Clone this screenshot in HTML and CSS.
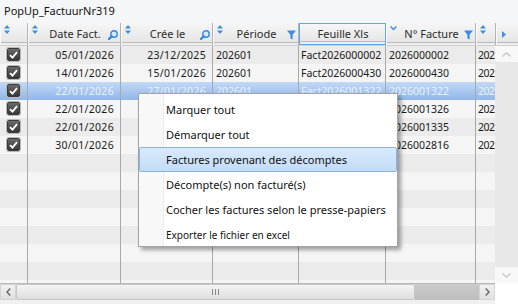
FILE: index.html
```html
<!DOCTYPE html>
<html lang="fr">
<head>
<meta charset="utf-8">
<title>PopUp_FactuurNr319</title>
<link rel="stylesheet" href="styles.css">
</head>
<body>
<div class="window">
  <div class="title">PopUp_FactuurNr319</div>
  <div class="grid">
    <div class="header">
      <div class="hcell">
        <svg class="sort" width="6" height="9" viewBox="0 0 6 9"><path d="M3 0L6 3.6H0Z M0 5.4H6L3 9Z"/></svg>
      </div>
      <div class="hcell">
        <svg class="sort" width="6" height="9" viewBox="0 0 6 9"><path d="M3 0L6 3.6H0Z M0 5.4H6L3 9Z"/></svg>
        <span class="hlabel">Date Fact.</span>
        <svg class="hicon" width="10" height="10" viewBox="0 0 10 10"><circle cx="6" cy="4" r="3.2" fill="#d7ebfc" stroke="#2e86dc" stroke-width="1.4"/><path d="M3.7 6.3L1 9" stroke="#2e86dc" stroke-width="2.2" stroke-linecap="round"/></svg>
      </div>
      <div class="hcell">
        <svg class="sort" width="6" height="9" viewBox="0 0 6 9"><path d="M3 0L6 3.6H0Z M0 5.4H6L3 9Z"/></svg>
        <span class="hlabel">Crée le</span>
        <svg class="hicon" width="10" height="10" viewBox="0 0 10 10"><circle cx="6" cy="4" r="3.2" fill="#d7ebfc" stroke="#2e86dc" stroke-width="1.4"/><path d="M3.7 6.3L1 9" stroke="#2e86dc" stroke-width="2.2" stroke-linecap="round"/></svg>
      </div>
      <div class="hcell">
        <svg class="sort" width="6" height="9" viewBox="0 0 6 9"><path d="M3 0L6 3.6H0Z M0 5.4H6L3 9Z"/></svg>
        <span class="hlabel">Période</span>
        <svg class="hicon" width="9" height="10" viewBox="0 0 9 10"><path d="M0 0.5H9L5.6 4.8V9.6L3.4 8.4V4.8Z" fill="#3a8de0"/></svg>
      </div>
      <div class="hcell focus">
        <span></span>
        <span class="hlabel">Feuille Xls</span>
        <span></span>
      </div>
      <div class="hcell">
        <svg class="chev" width="7" height="5" viewBox="0 0 7 5"><path d="M0.6 0.6L3.5 3.6L6.4 0.6" fill="none" stroke="#3a8de0" stroke-width="1.4"/></svg>
        <span class="hlabel">N° Facture</span>
        <svg class="hicon" width="9" height="10" viewBox="0 0 9 10"><path d="M0 0.5H9L5.6 4.8V9.6L3.4 8.4V4.8Z" fill="#3a8de0"/></svg>
      </div>
      <div class="hcell">
        <svg class="sort" width="6" height="9" viewBox="0 0 6 9"><path d="M3 0L6 3.6H0Z M0 5.4H6L3 9Z"/></svg>
      </div>
      <div class="hcell last">
        <svg class="tri" width="4" height="7" viewBox="0 0 4 7"><path d="M0 0L4 3.5L0 7Z"/></svg>
      </div>
    </div>

    <div class="body">
      <div class="rows">
        <div class="row">
          <div class="cell chk"><span class="checkbox"><svg width="9" height="8" viewBox="0 0 9 8"><path d="M1 4.2L3.5 6.6L8 1.2" fill="none" stroke="#fff" stroke-width="1.8"/></svg></span></div>
          <div class="cell date">05/01/2026</div>
          <div class="cell date">23/12/2025</div>
          <div class="cell">202601</div>
          <div class="cell tight">Fact2026000002</div>
          <div class="cell">2026000002</div>
          <div class="cell">202</div>
        </div>
        <div class="row">
          <div class="cell chk"><span class="checkbox"><svg width="9" height="8" viewBox="0 0 9 8"><path d="M1 4.2L3.5 6.6L8 1.2" fill="none" stroke="#fff" stroke-width="1.8"/></svg></span></div>
          <div class="cell date">14/01/2026</div>
          <div class="cell date">15/01/2026</div>
          <div class="cell">202601</div>
          <div class="cell tight">Fact2026000430</div>
          <div class="cell">2026000430</div>
          <div class="cell">202</div>
        </div>
        <div class="row sel">
          <div class="cell chk"><span class="checkbox"><svg width="9" height="8" viewBox="0 0 9 8"><path d="M1 4.2L3.5 6.6L8 1.2" fill="none" stroke="#fff" stroke-width="1.8"/></svg></span></div>
          <div class="cell date">22/01/2026</div>
          <div class="cell date">27/01/2026</div>
          <div class="cell">202601</div>
          <div class="cell tight">Fact2026001322</div>
          <div class="cell">2026001322</div>
          <div class="cell">202</div>
        </div>
        <div class="row">
          <div class="cell chk"><span class="checkbox"><svg width="9" height="8" viewBox="0 0 9 8"><path d="M1 4.2L3.5 6.6L8 1.2" fill="none" stroke="#fff" stroke-width="1.8"/></svg></span></div>
          <div class="cell date">22/01/2026</div>
          <div class="cell date"></div>
          <div class="cell"></div>
          <div class="cell tight"></div>
          <div class="cell">2026001326</div>
          <div class="cell">202</div>
        </div>
        <div class="row">
          <div class="cell chk"><span class="checkbox"><svg width="9" height="8" viewBox="0 0 9 8"><path d="M1 4.2L3.5 6.6L8 1.2" fill="none" stroke="#fff" stroke-width="1.8"/></svg></span></div>
          <div class="cell date">22/01/2026</div>
          <div class="cell date"></div>
          <div class="cell"></div>
          <div class="cell tight"></div>
          <div class="cell">2026001335</div>
          <div class="cell">202</div>
        </div>
        <div class="row">
          <div class="cell chk"><span class="checkbox"><svg width="9" height="8" viewBox="0 0 9 8"><path d="M1 4.2L3.5 6.6L8 1.2" fill="none" stroke="#fff" stroke-width="1.8"/></svg></span></div>
          <div class="cell date">30/01/2026</div>
          <div class="cell date"></div>
          <div class="cell"></div>
          <div class="cell tight"></div>
          <div class="cell">2026002816</div>
          <div class="cell">202</div>
        </div>
        <div class="row"><div class="cell"></div><div class="cell"></div><div class="cell"></div><div class="cell"></div><div class="cell"></div><div class="cell"></div><div class="cell"></div></div>
        <div class="row"><div class="cell"></div><div class="cell"></div><div class="cell"></div><div class="cell"></div><div class="cell"></div><div class="cell"></div><div class="cell"></div></div>
        <div class="row"><div class="cell"></div><div class="cell"></div><div class="cell"></div><div class="cell"></div><div class="cell"></div><div class="cell"></div><div class="cell"></div></div>
        <div class="row"><div class="cell"></div><div class="cell"></div><div class="cell"></div><div class="cell"></div><div class="cell"></div><div class="cell"></div><div class="cell"></div></div>
        <div class="row"><div class="cell"></div><div class="cell"></div><div class="cell"></div><div class="cell"></div><div class="cell"></div><div class="cell"></div><div class="cell"></div></div>
        <div class="row"><div class="cell"></div><div class="cell"></div><div class="cell"></div><div class="cell"></div><div class="cell"></div><div class="cell"></div><div class="cell"></div></div>
        <div class="row"><div class="cell"></div><div class="cell"></div><div class="cell"></div><div class="cell"></div><div class="cell"></div><div class="cell"></div><div class="cell"></div></div>
        <div class="row"><div class="cell"></div><div class="cell"></div><div class="cell"></div><div class="cell"></div><div class="cell"></div><div class="cell"></div><div class="cell"></div></div>
      </div>
      <div class="vscroll">
        <div class="vbtn"><svg width="9" height="5" viewBox="0 0 9 5"><path d="M0.5 4.5L4.5 0.8L8.5 4.5" fill="none" stroke="#c4c4c4" stroke-width="1.3"/></svg></div>
        <div class="vtrack"></div>
        <div class="vbtn"><svg width="9" height="5" viewBox="0 0 9 5"><path d="M0.5 0.5L4.5 4.2L8.5 0.5" fill="none" stroke="#c4c4c4" stroke-width="1.3"/></svg></div>
      </div>
    </div>

    <div class="footer">
      <div class="hscroll">
        <div class="hbtn"><svg width="5" height="8" viewBox="0 0 5 8"><path d="M4.3 0.5L1 4L4.3 7.5" fill="none" stroke="#6a6a6a" stroke-width="1.5"/></svg></div>
        <div class="thumb"><span class="grip"></span><span class="grip"></span><span class="grip"></span></div>
        <div class="track"></div>
        <div class="hbtn"><svg width="5" height="8" viewBox="0 0 5 8"><path d="M0.7 0.5L4 4L0.7 7.5" fill="none" stroke="#6a6a6a" stroke-width="1.5"/></svg></div>
      </div>
      <div class="corner"></div>
    </div>
  </div>

  <div class="menu">
    <div class="mi">Marquer tout</div>
    <div class="mi">Démarquer tout</div>
    <div class="mi hot">Factures provenant des décomptes</div>
    <div class="mi">Décompte(s) non facturé(s)</div>
    <div class="mi">Cocher les factures selon le presse-papiers</div>
    <div class="mi small">Exporter le fichier en excel</div>
  </div>
</div>
</body>
</html>
```

FILE: styles.css
```css
* { box-sizing: border-box; }

html, body {
  margin: 0;
  padding: 0;
}

body {
  font-family: "Noto Sans", "Open Sans", sans-serif;
  background: #f0f0f0;
  color: #1a1a1a;
}

.window {
  position: relative;
  width: 518px;
  height: 304px;
  overflow: hidden;
  display: flex;
  flex-direction: column;
  background: #f0f0f0;
}

.title {
  height: 23px;
  line-height: 22px;
  padding-left: 4px;
  font-size: 11px;
  color: #111;
  background: #f5f6f7;
}

.grid {
  flex: 1;
  display: flex;
  flex-direction: column;
  min-height: 0;
}

/* header */
.header {
  height: 23px;
  display: grid;
  grid-template-columns: 28px 93px 92px 86px 87px 90px 20px 22px;
  background: #e6e6e6;
  border-bottom: 1px solid #d0d0d0;
}

.hcell {
  display: grid;
  grid-template-columns: 1fr auto 1fr;
  align-items: center;
  padding: 0 2px 0 3px;
  background: linear-gradient(#f6f6f6, #e3e3e3);
  border-right: 1px solid #b4b4b4;
  border-left: 1px solid #fbfbfb;
  box-shadow: inset 0 -2px 0 #eeeeee, inset 0 -3px 0 #b9b9b9;
  font-size: 11px;
  color: #2c2c2c;
  white-space: nowrap;
  overflow: hidden;
}

.hcell.focus {
  border: 1px solid #5ea9ea;
}

.hcell.last {
  border-right: none;
}

.hlabel {
  text-align: center;
  padding-bottom: 1px;
}

.sort {
  align-self: start;
  margin-top: 2px;
  fill: #3d8fe2;
}

.chev {
  align-self: start;
  margin-top: 3px;
}

.tri {
  fill: #3d8fe2;
  margin-left: 2px;
}

.hicon {
  justify-self: end;
  margin-top: 1px;
}

/* body */
.body {
  height: 237px;
  display: flex;
}

.rows {
  width: 495px;
  overflow: hidden;
}

.row {
  height: 18px;
  display: grid;
  grid-template-columns: 28px 93px 92px 86px 87px 90px 19px;
  background: #ebebeb;
}

.row:nth-child(even) {
  background: #f5f5f5;
}

.row.sel {
  background: linear-gradient(#c2d9f6, #90b6e9);
  color: #eaf1fb;
}

.cell {
  border-right: 1px solid #a9a9a9;
  font-size: 10.5px;
  line-height: 18px;
  padding: 0 3px;
  white-space: nowrap;
  overflow: hidden;
}

.cell:last-child {
  border-right: none;
  padding: 0 0 0 2px;
  letter-spacing: -0.5px;
}

.cell.tight {
  padding-left: 2px;
}

.cell.date {
  text-align: right;
  padding-right: 6px;
  letter-spacing: 0.3px;
}

.cell.chk {
  display: flex;
  align-items: center;
  justify-content: center;
  padding: 0 0 1px 0;
}

.checkbox {
  width: 13px;
  height: 13px;
  border-radius: 2px;
  background: linear-gradient(#6a6a6a, #363636);
  border: 1px solid #3a3a3a;
  box-shadow: 0 0 0 1px #b8b8b8;
  display: flex;
  align-items: center;
  justify-content: center;
}

.vscroll {
  flex: 1;
  display: flex;
  flex-direction: column;
  background: #e8e8e8;
}

.vbtn {
  height: 16px;
  background: #f8f8f8;
  display: flex;
  align-items: center;
  justify-content: center;
}

.vtrack {
  flex: 1;
}

/* footer */
.footer {
  flex: 1;
  display: flex;
}

.hscroll {
  width: 495px;
  height: 17px;
  display: flex;
  border-top: 1px solid #b8b8b8;
  background: #e4e4e4;
}

.hbtn {
  width: 16px;
  display: flex;
  align-items: center;
  justify-content: center;
  background: linear-gradient(#f1f1f1, #e0e0e0);
  border: 1px solid #d4d4d4;
}

.thumb {
  width: 399px;
  display: flex;
  align-items: center;
  justify-content: center;
  gap: 2px;
  background: linear-gradient(#f4f4f4, #dedede);
  border: 1px solid #c6c6c6;
  border-radius: 2px;
}

.grip {
  width: 1px;
  height: 6px;
  background: #8a8a8a;
}

.track {
  flex: 1;
  background: linear-gradient(#cbcbcb, #bdbdbd);
}

.corner {
  flex: 1;
  background: #ffffff;
}

/* context menu */
.menu {
  position: absolute;
  left: 138px;
  top: 93px;
  width: 260px;
  height: 154px;
  padding-top: 3px;
  background: linear-gradient(90deg, #f8f8f8 0, #f8f8f8 24px, #ececec 24px, #ececec 25px, #ffffff 25px);
  border: 1px solid #a3a3a3;
  box-shadow: 3px 3px 4px rgba(0, 0, 0, 0.35);
}

.mi {
  height: 25px;
  display: flex;
  align-items: center;
  padding-left: 27px;
  font-size: 11px;
  color: #111;
  white-space: nowrap;
}

.mi.hot {
  background: linear-gradient(#d9eafb, #c3dcf7);
  border: 1px solid #84b5e8;
  border-radius: 2px;
  padding-left: 26px;
}

.mi.small {
  font-size: 10px;
}
```
